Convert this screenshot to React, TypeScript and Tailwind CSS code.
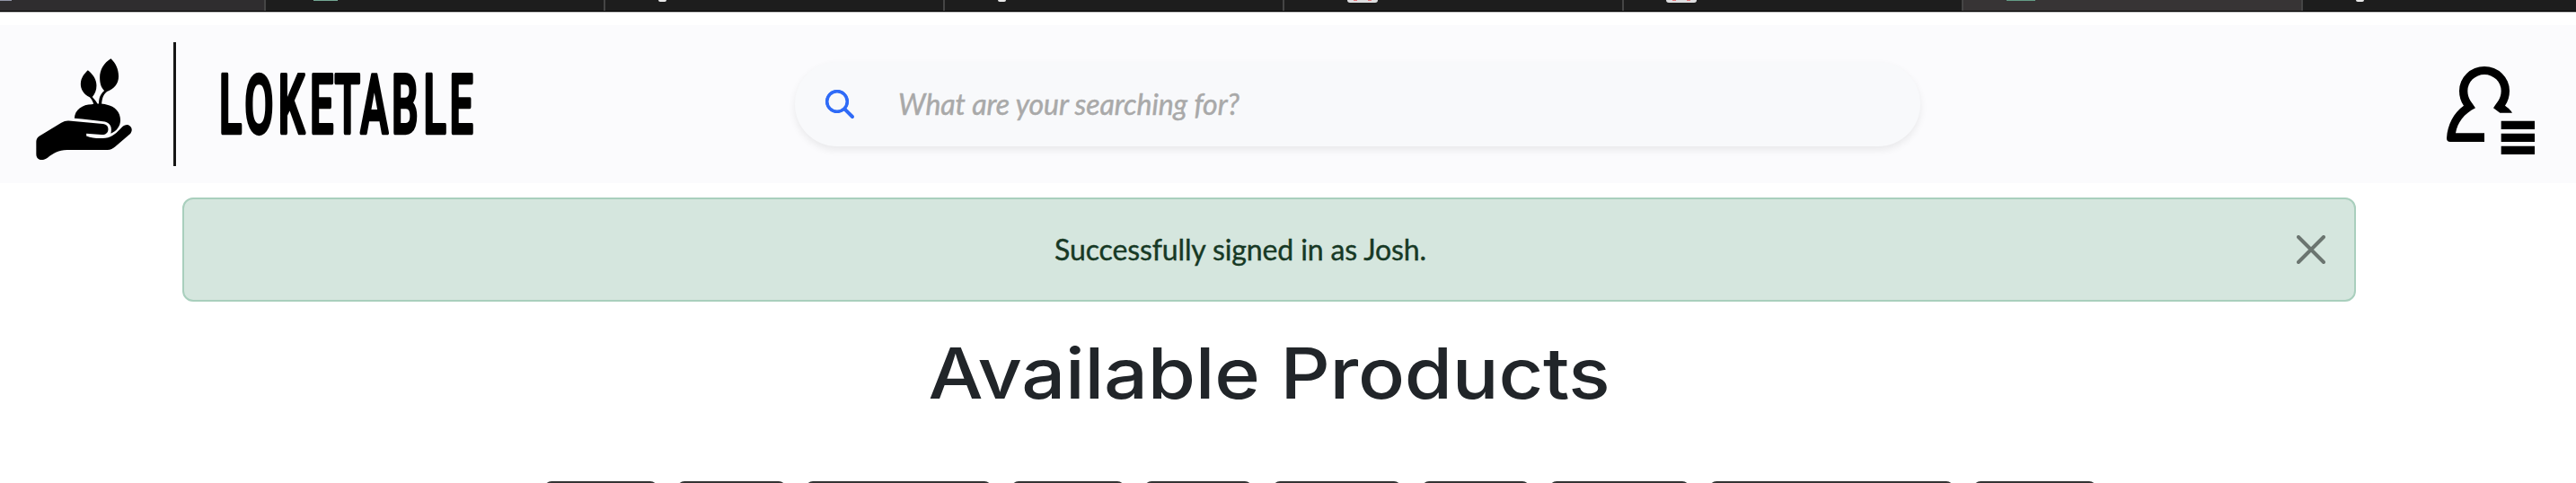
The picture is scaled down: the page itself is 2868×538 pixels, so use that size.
import React from "react";

const tabs = [
  { id: 1, tab: "w-[296px] bg-[#2f2d2f]", icon: "ml-0 h-px w-[13px] bg-[#9295a6]" },
  { id: 2, tab: "w-[378px] bg-[#1d1d1d]", icon: "ml-[53px] h-px w-[27px] bg-[#73a793]" },
  { id: 3, tab: "w-[378px] bg-[#1d1d1d]", icon: "ml-[59px] h-[2px] w-[9px] rounded-b-full bg-[#e8e8e8]" },
  { id: 4, tab: "w-[378px] bg-[#1d1d1d]", icon: "ml-[59px] h-[2px] w-[9px] rounded-b-full bg-[#e8e8e8]" },
  { id: 5, tab: "w-[378px] bg-[#1d1d1d]", icon: "ml-[70px] h-[3px] w-[34px] rounded-b-[3px] bg-[#dedee0]", dots: true },
  { id: 6, tab: "w-[378px] bg-[#1d1d1d]", icon: "ml-[47px] h-[3px] w-[34px] rounded-b-[3px] bg-[#dedee0]", dots: true },
  { id: 7, tab: "w-[378px] bg-[#373435]", icon: "ml-[48px] h-px w-[32px] bg-[#649c86]" },
  { id: 8, tab: "w-[310px] bg-[#1d1d1d]", icon: "ml-[59px] h-[2px] w-[9px] rounded-b-full bg-[#e8e8e8]" },
];

const filters = [
  "w-[126px]",
  "ml-[22px] w-[121px]",
  "ml-[22px] w-[207px]",
  "ml-[22px] w-[126px]",
  "ml-[22px] w-[120px]",
  "ml-[23px] w-[143px]",
  "ml-[23px] w-[120px]",
  "ml-[22px] w-[156px]",
  "ml-[22px] w-[272px]",
  "ml-[22px] w-[137px]",
];

function TabStrip() {
  return (
    <div className="flex h-[14px] w-full overflow-hidden border-b border-[#b5b5b5]">
      <div className="flex h-[13px] w-full border-b border-black">
        {tabs.map((t) => (
          <div key={t.id} className={`shrink-0 border-r-2 border-[#454545] ${t.tab}`}>
            <div className={`flex justify-center gap-[12px] ${t.icon}`}>
              {t.dots && (
                <>
                  <i className="h-px w-[4px] bg-[#e2777b]" />
                  <i className="h-px w-[4px] bg-[#e2777b]" />
                </>
              )}
            </div>
          </div>
        ))}
      </div>
    </div>
  );
}

function HandLogo() {
  return (
    <svg viewBox="60 43 322 341" className="mt-[12px] ml-10 h-[114px] w-[107px]" aria-hidden="true">
      <path d="M234 82C252 96 263 113 263 133C263 149 258 161 249 171C257 180 264 187 267 197H254C251 187 247 179 240 172C220 162 209 145 210 126C211 108 221 94 234 82Z" />
      <path d="M311 43C327 58 337 78 337 102C337 128 322 144 298 153C284 164 281 180 280 197H271C270 177 275 162 289 150C278 140 274 125 274 106C274 80 288 57 311 43Z" />
      <path d="M189 243C190 214 216 196 247 196C260 194 282 193 296 197C326 202 343 224 343 249C343 270 330 286 311 294C316 273 309 258 291 254C260 250 222 246 189 243Z" />
      <path d="M61 321Q61 309 72 302L145 258Q158 250 170 251L284 262C298 264 303 271 302 282C301 292 293 299 280 298L229 294V302C248 309 270 312 293 309C318 306 330 291 348 273C355 266 364 263 371 266C383 271 384 286 376 295L326 338Q314 349 300 349H164C135 349 119 360 99 375C89 382 80 384 72 381Q61 376 61 363Z" />
    </svg>
  );
}

function Wordmark() {
  return (
    <svg viewBox="0 -30 300 150" className="ml-[44px] h-[150px] w-[300px]">
      <text
        transform="scale(.52 1)"
        x="7.5 62 134 202 255 310 377 445 501"
        y="76.5"
        fontSize="90"
        className="fill-black stroke-black font-['Roboto'] font-medium"
        strokeWidth="3.4"
        strokeLinejoin="round"
        style={{ vectorEffect: "non-scaling-stroke" }}
      >
        LOKETABLE
      </text>
    </svg>
  );
}

function SearchBar() {
  return (
    <label className="ml-[345px] flex h-[94px] w-[1253px] items-center rounded-[47px] bg-[#f8f9fb] pl-[34px] shadow-[0_4px_8px_rgba(0,0,0,0.075)]">
      <svg viewBox="0 0 16 16" className="h-8 w-8 overflow-visible fill-[#2f6bf7]">
        <path d="M11.742 10.344a6.5 6.5 0 1 0-1.397 1.398h-.001q.044.06.098.115l3.85 3.85a1 1 0 0 0 1.415-1.414l-3.85-3.85a1 1 0 0 0-.115-.1zM12 6.5a5.5 5.5 0 1 1-11 0 5.5 5.5 0 0 1 11 0" />
        <circle cx="6.5" cy="6.5" r="5.6" fill="none" stroke="#2f6bf7" strokeWidth="1.7" />
      </svg>
      <span className="ml-[49px] text-[32px] leading-[48px] tracking-[-0.08px] whitespace-nowrap text-[#a9a9a9] italic [-webkit-text-stroke:0.5px_#a9a9a9]">
        What are your searching for?
      </span>
    </label>
  );
}

function AccountIcon() {
  return (
    <svg viewBox="252 222 294 294" className="mt-[14px] mr-[46px] ml-auto h-[98px] w-[98px]" aria-hidden="true">
      <path d="M252 462C255 415 275 378 309 353C299 340 294 322 294 304A84 82 0 0 1 462 304C462 322 457 340 447 353Q460 361 471 377H430L408 361C420 342 434 330 434 304A56 55 0 0 0 322 304C322 330 336 342 348 361C310 380 288 410 282 445H378V474H264Q252 474 252 462Z" />
      <path d="M434 404h112v28H434zM434 446h112v28H434zM434 488h112v28H434z" />
    </svg>
  );
}

export default function App() {
  return (
    <div className="h-[538px] w-[2868px] overflow-hidden bg-white font-['Lato',sans-serif]">
      <TabStrip />
      <header className="mt-[14px] flex h-[176px] items-center bg-[#fbfbfd]">
        <HandLogo />
        <div className="ml-[46px] h-[138px] w-[3px] bg-[#151515]" />
        <Wordmark />
        <SearchBar />
        <AccountIcon />
      </header>
      <div
        role="alert"
        className="mt-4 ml-[203px] flex h-[116px] w-[2420px] items-center rounded-[12px] border-2 border-[#a9cfbd] bg-[#d5e6de] pl-8"
      >
        <p className="flex-1 text-center text-[32px] leading-[48px] tracking-[-0.12px] text-[#173925] [-webkit-text-stroke:0.4px_#173925]">
          Successfully signed in as Josh.
        </p>
        <button className="mr-8 ml-8 h-8 w-8" aria-label="Close">
          <svg viewBox="0 0 32 32" className="h-8 w-8" fill="none" stroke="#6b7570" strokeWidth="4" strokeLinecap="round">
            <path d="M2 2l28 28M30 2L2 30" />
          </svg>
        </button>
      </div>
      <h1 className="mt-8 ml-[203px] w-[2420px] scale-x-[1.105] text-center font-['Inter',sans-serif] text-[78px] leading-[96px] font-medium tracking-[-0.2px] text-[#212529]">
        Available Products
      </h1>
      <div className="mt-[72px] ml-[606px] flex">
        {filters.map((f, i) => (
          <button key={i} className={`h-[76px] shrink-0 rounded-[8px] border-2 border-[#343434] ${f}`} />
        ))}
      </div>
    </div>
  );
}
